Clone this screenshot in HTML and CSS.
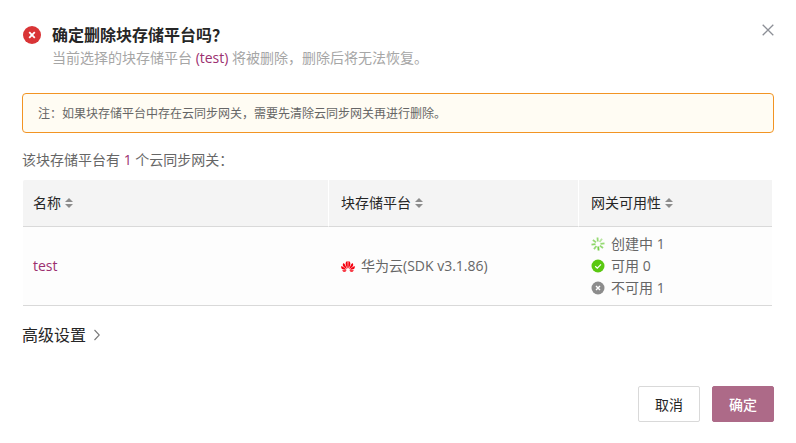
FILE: index.html
```html
<!DOCTYPE html>
<html lang="zh-CN">
<head>
    <meta charset="UTF-8">
    <meta name="viewport" content="width=device-width, initial-scale=1.0">
    <title>删除块存储平台</title>
    <link rel="stylesheet" href="styles.css">
</head>
<body>
    <div class="dialog" role="dialog" aria-labelledby="dialogTitle">
        <!-- 标题 -->
        <div class="dialog-header">
            <svg class="error-icon" viewBox="0 0 18 18">
                <circle cx="9" cy="9" r="9" fill="#d93436"/>
                <path d="M6.2 6.2l5.6 5.6M11.8 6.2l-5.6 5.6" stroke="#fff" stroke-width="1.8"/>
            </svg>
            <div class="header-text">
                <h1 class="title" id="dialogTitle">确定删除块存储平台吗？</h1>
                <p class="subtitle">当前选择的块存储平台 <span class="highlight">(test)</span> 将被删除，删除后将无法恢复。</p>
            </div>
            <button class="close-button" type="button" aria-label="关闭">
                <svg viewBox="0 0 12 12" width="12" height="12">
                    <path d="M.7 .7l10.6 10.6M11.3 .7L.7 11.3" stroke="#8c8f96" stroke-width="1.3"/>
                </svg>
            </button>
        </div>

        <div class="notice">注：如果块存储平台中存在云同步网关，需要先清除云同步网关再进行删除。</div>

        <p class="summary">该块存储平台有 <span class="highlight">1</span> 个云同步网关：</p>

        <!-- 网关列表 -->
        <table class="gateway-table">
            <thead>
                <tr>
                    <th class="col-name">名称<svg class="sort-icon" viewBox="0 0 8 10"><path d="M4 0l4 4H0zM4 10l4-4H0z" fill="#8c8c8c"/></svg></th>
                    <th class="col-platform">块存储平台<svg class="sort-icon" viewBox="0 0 8 10"><path d="M4 0l4 4H0zM4 10l4-4H0z" fill="#8c8c8c"/></svg></th>
                    <th class="col-status">网关可用性<svg class="sort-icon" viewBox="0 0 8 10"><path d="M4 0l4 4H0zM4 10l4-4H0z" fill="#8c8c8c"/></svg></th>
                </tr>
            </thead>
            <tbody>
                <tr>
                    <td><a class="highlight" href="#">test</a></td>
                    <td>
                        <div class="item">
                            <svg class="brand-icon" viewBox="0 0 28 22">
                                <g fill="#f5000f">
                                    <path d="M13.200 15.500C10 10.500 8.400 6 9.600 3C10.300 1.400 11.600 .4 13 .2C13.600 5.500 13.600 11 13.200 15.500z"/>
                                    <path d="M14.800 15.500C18 10.500 19.600 6 18.400 3C17.700 1.400 16.400 .4 15 .2C14.400 5.500 14.400 11 14.800 15.500z"/>
                                    <path d="M11.800 16.200C10.600 12 8.400 7.400 5.300 4C3.300 5.500 3 8 4.300 10.200C6 12.700 9 14.800 11.800 16.200z"/>
                                    <path d="M16.200 16.200C17.400 12 19.600 7.400 22.700 4C24.700 5.500 25 8 23.700 10.200C22 12.700 19 14.800 16.200 16.200z"/>
                                    <path d="M11 17.200C7.800 14.200 4.400 11.400 .8 9.800C-.2 12.600 .8 15.400 3.500 16.600C5.500 17.400 8.200 17.400 11 17.200z"/>
                                    <path d="M17 17.200C20.200 14.200 23.600 11.400 27.200 9.800C28.200 12.600 27.200 15.400 24.500 16.600C22.500 17.400 19.800 17.400 17 17.200z"/>
                                    <path d="M11.200 18.300H2.400C3.700 21 5.500 21.900 7.500 21.500C9 21.200 10.300 19.700 11.200 18.300z"/>
                                    <path d="M16.800 18.300H25.600C24.300 21 22.500 21.900 20.500 21.500C19 21.200 17.700 19.700 16.800 18.300z"/>
                                </g>
                            </svg>
                            <span>华为云(SDK v3.1.86)</span>
                        </div>
                    </td>
                    <td>
                        <div class="item">
                            <svg class="status-icon" viewBox="0 0 14 14">
                                <g stroke="#52c41a" stroke-width="1.8">
                                    <path d="M6.500 .5l.3 4" opacity=".6"/>
                                    <path d="M11 1.800L8.600 5" opacity=".4"/>
                                    <path d="M13.500 6.300l-4 .5" opacity=".6"/>
                                    <path d="M12 11L8.900 8.600" opacity=".6"/>
                                    <path d="M7.600 13.500l-.4-4" opacity=".8"/>
                                    <path d="M3 12.100L5.400 9" opacity=".6"/>
                                    <path d="M.5 7.700l4-.5" opacity=".65"/>
                                    <path d="M1.900 3L5 5.400" opacity=".6"/>
                                </g>
                            </svg>
                            <span>创建中 1</span>
                        </div>
                        <div class="item">
                            <svg class="status-icon" viewBox="0 0 14 14">
                                <circle cx="7" cy="7" r="6.500" fill="#5ac811"/>
                                <path d="M4.200 7.200l2.100 2L10 5.400" fill="none" stroke="#fff" stroke-width="1.200"/>
                            </svg>
                            <span>可用 0</span>
                        </div>
                        <div class="item">
                            <svg class="status-icon" viewBox="0 0 14 14">
                                <circle cx="7" cy="7" r="6.500" fill="#8c8c8c"/>
                                <path d="M5 5l4 4M9 5L5 9" stroke="#fff" stroke-width="1.400"/>
                            </svg>
                            <span>不可用 1</span>
                        </div>
                    </td>
                </tr>
            </tbody>
        </table>

        <button class="advanced" type="button">
            高级设置
            <svg viewBox="0 0 6 12" width="6" height="12">
                <path d="M.5 1L5.300 6L.5 11" fill="none" stroke="#777" stroke-width="1.1"/>
            </svg>
        </button>

        <!-- 底部按钮 -->
        <div class="dialog-footer">
            <button class="btn" type="button">取消</button>
            <button class="btn btn-primary" type="button">确定</button>
        </div>
    </div>
</body>
</html>
```
FILE: styles.css
```css
* {
    box-sizing: border-box;
}
body {
    margin: 0;
    background: #fff;
    color: #666;
    font-family: "Open Sans", "Noto Sans CJK SC", sans-serif;
    font-size: 14px;
    line-height: 22px;
}
button {
    font-family: inherit;
    cursor: pointer;
}
.dialog {
    padding: 24px 22px 20px;
}
.dialog-header {
    display: flex;
    align-items: flex-start;
}
.error-icon {
    width: 18px;
    height: 18px;
    margin: 2px 11px 0 1px;
}
.header-text {
    flex: 1;
}
.title {
    margin: 0 0 1px;
    color: #262626;
    font-size: 16px;
    line-height: 22px;
    font-weight: 700;
}
.subtitle {
    margin: 0;
    color: #a6a6a6;
}
.highlight {
    color: #9c2f70;
    text-decoration: none;
}
.close-button {
    display: flex;
    padding: 0;
    border: none;
    background: none;
}
.notice {
    margin-top: 24px;
    padding: 10px 15px 8px;
    border: 1px solid #f29423;
    border-radius: 4px;
    background: #fffcf3;
    font-size: 12px;
    line-height: 20px;
}
.summary {
    margin: 16px 0 9px;
}

/* 表格 */
.gateway-table {
    width: calc(100% - 3px);
    margin-left: 1px;
    table-layout: fixed;
    border-collapse: separate;
    border-spacing: 0;
}
.gateway-table th {
    padding: 12px;
    border-bottom: 1px solid #d9d9d9;
    border-left: 1px solid #fff;
    background: #f4f4f4;
    color: #262626;
    font-weight: 400;
    text-align: left;
}
.gateway-table th:first-child {
    padding-left: 10px;
    border-left: none;
    border-top-left-radius: 2px;
}
.gateway-table td {
    padding: 6px 13px;
    border-bottom: 1px solid #d9d9d9;
    background: #fdfdfd;
}
.gateway-table td:first-child {
    padding-left: 10px;
}
.col-name {
    width: 305px;
}
.col-platform {
    width: 250px;
}
.sort-icon {
    width: 8px;
    height: 10px;
    margin-left: 4px;
}
.item {
    display: flex;
    align-items: center;
    gap: 6px;
}
.brand-icon {
    width: 14px;
    height: 11px;
}
.status-icon {
    width: 14px;
    height: 14px;
}

.advanced {
    display: flex;
    align-items: center;
    gap: 8px;
    margin-top: 17px;
    padding: 0;
    border: none;
    background: none;
    color: #262626;
    font-size: 16px;
    line-height: 24px;
}
.dialog-footer {
    display: flex;
    justify-content: flex-end;
    gap: 12px;
    margin-top: 39px;
}
.btn {
    height: 36px;
    padding: 0 16px;
    border: 1px solid #d9d9d9;
    border-radius: 2px;
    background: #fff;
    color: #262626;
    font-size: 14px;
}
.btn-primary {
    border-color: #ad6a88;
    background: #ad6a88;
    color: #fff;
    font-weight: 500;
}
```
